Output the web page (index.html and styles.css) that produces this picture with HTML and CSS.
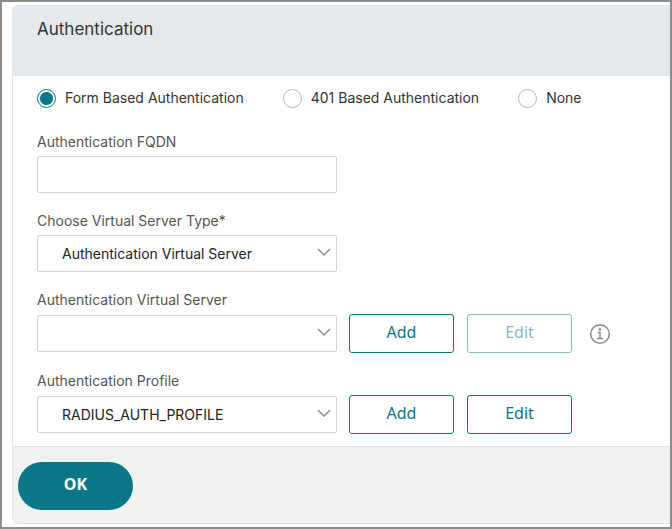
FILE: index.html
```html
<!DOCTYPE html>
<html lang="en">
  <head>
    <meta charset="UTF-8" />
    <meta name="viewport" content="width=device-width, initial-scale=1.0" />
    <title>Authentication</title>
    <link rel="stylesheet" href="styles.css">
  </head>
  <body>
    <form class="panel">
      <header class="panel-header">
        <h1>Authentication</h1>
      </header>

      <div class="panel-body">
        <!-- authentication mode -->
        <div class="radios">
          <label class="radio"><input type="radio" name="mode" checked />Form Based Authentication</label>
          <label class="radio"><input type="radio" name="mode" />401 Based Authentication</label>
          <label class="radio"><input type="radio" name="mode" />None</label>
        </div>

        <div class="field">
          <label for="fqdn">Authentication FQDN</label>
          <div class="row">
            <input class="control" type="text" id="fqdn" />
          </div>
        </div>

        <div class="field">
          <label for="type">Choose Virtual Server Type*</label>
          <div class="row">
            <div class="select">
              <select class="control" id="type">
                <option>Authentication Virtual Server</option>
              </select>
              <svg class="arrow" viewBox="0 0 14 8"><path d="M1 1l6 6 6-6" /></svg>
            </div>
          </div>
        </div>

        <div class="field">
          <label for="server">Authentication Virtual Server</label>
          <div class="row">
            <div class="select">
              <select class="control" id="server">
                <option></option>
              </select>
              <svg class="arrow" viewBox="0 0 14 8"><path d="M1 1l6 6 6-6" /></svg>
            </div>
            <div class="buttons">
              <button class="btn" type="button">Add</button>
              <button class="btn" type="button" disabled>Edit</button>
            </div>
            <svg class="info" viewBox="0 0 22 22">
              <circle cx="11" cy="11" r="9.3" />
              <path d="M8.5 9.5h2.5v6M8 15.5h6" />
              <path class="dot" d="M9.7 5.3h2.3v2.3h-2.3z" />
            </svg>
          </div>
        </div>

        <div class="field">
          <label for="profile">Authentication Profile</label>
          <div class="row">
            <div class="select">
              <select class="control" id="profile">
                <option>RADIUS_AUTH_PROFILE</option>
              </select>
              <svg class="arrow" viewBox="0 0 14 8"><path d="M1 1l6 6 6-6" /></svg>
            </div>
            <div class="buttons">
              <button class="btn" type="button">Add</button>
              <button class="btn" type="button">Edit</button>
            </div>
          </div>
        </div>
      </div>

      <footer class="panel-footer">
        <button class="ok" type="submit">OK</button>
      </footer>
    </form>
  </body>
</html>
```

FILE: styles.css
```css
* {
  box-sizing: border-box;
}
body {
  margin: 0;
  min-height: 100vh;
  padding: 3px 0 3px 10px;
  border: 2px solid #8c8c8c;
  background-color: #fff;
  color: #333;
  font-family: Inter, "Liberation Sans", sans-serif;
  font-size: 14px;
  line-height: 20px;
}

/* panel */
.panel {
  border-left: 1px solid #e3e8ec;
  border-bottom: 1px solid #dfe3e8;
  border-radius: 6px 0 0 6px;
  overflow: hidden;
}
.panel-header {
  height: 71px;
  padding: 14px 24px;
  background-color: #e4e9ed;
}
.panel-header h1 {
  margin: 0;
  font-size: 17px;
  font-weight: 400;
  line-height: 20px;
}
.panel-body {
  display: flex;
  flex-direction: column;
  gap: 18px;
  padding: 12px 24px 12px;
}
.panel-footer {
  padding: 15px 5px 13px;
  border-top: 1px solid #e3e6e8;
  background-color: #f0f1f1;
}

/* radio */
.radios {
  display: flex;
  flex-wrap: wrap;
  gap: 39px;
  margin-bottom: 6px;
}
.radio {
  display: flex;
  align-items: center;
  gap: 9px;
}
.radio input {
  appearance: none;
  width: 19px;
  height: 19px;
  margin: 0;
  border: 1px solid #b8b8b8;
  border-radius: 50%;
  background-color: #fff;
}
.radio input:checked {
  border-color: #09768a;
  background: radial-gradient(circle, #09768a 6px, #fff 7px);
}

/* field */
.field {
  display: flex;
  flex-direction: column;
  gap: 4px;
}
.field label {
  align-self: flex-start;
  color: #555;
}
.row {
  display: flex;
  align-items: center;
}
.control {
  width: 300px;
  height: 37px;
  padding: 0 24px;
  border: 1px solid #d4d4d4;
  border-radius: 2px;
  background-color: #fff;
  color: #222;
  font: inherit;
}
.select {
  position: relative;
}
.select .control {
  display: block;
  appearance: none;
}
.arrow {
  position: absolute;
  top: 13px;
  right: 6px;
  width: 14px;
  height: 8px;
  fill: none;
  stroke: #8b8f94;
  stroke-width: 1.5;
  pointer-events: none;
}

/* buttons */
.buttons {
  display: flex;
  gap: 13px;
  margin-left: 12px;
}
.btn {
  width: 105px;
  height: 39px;
  padding: 0 0 4px;
  border: 1px solid #09768a;
  border-radius: 3px;
  background-color: #fff;
  color: #09768a;
  font-family: "Noto Sans", sans-serif;
  font-size: 16px;
}
.btn:disabled {
  border-color: #84b9c5;
  color: #84b9c5;
}
.info {
  width: 22px;
  height: 22px;
  margin-left: 17px;
  fill: none;
  stroke: #8c8c8c;
  stroke-width: 1.5;
}
.info .dot {
  fill: #8c8c8c;
  stroke: none;
}
.ok {
  display: block;
  width: 115px;
  height: 48px;
  padding: 0 0 4px;
  border: none;
  border-radius: 24px;
  background-color: #09768a;
  color: #fff;
  font-family: "Noto Sans", sans-serif;
  font-size: 16px;
  font-weight: 700;
}
```
